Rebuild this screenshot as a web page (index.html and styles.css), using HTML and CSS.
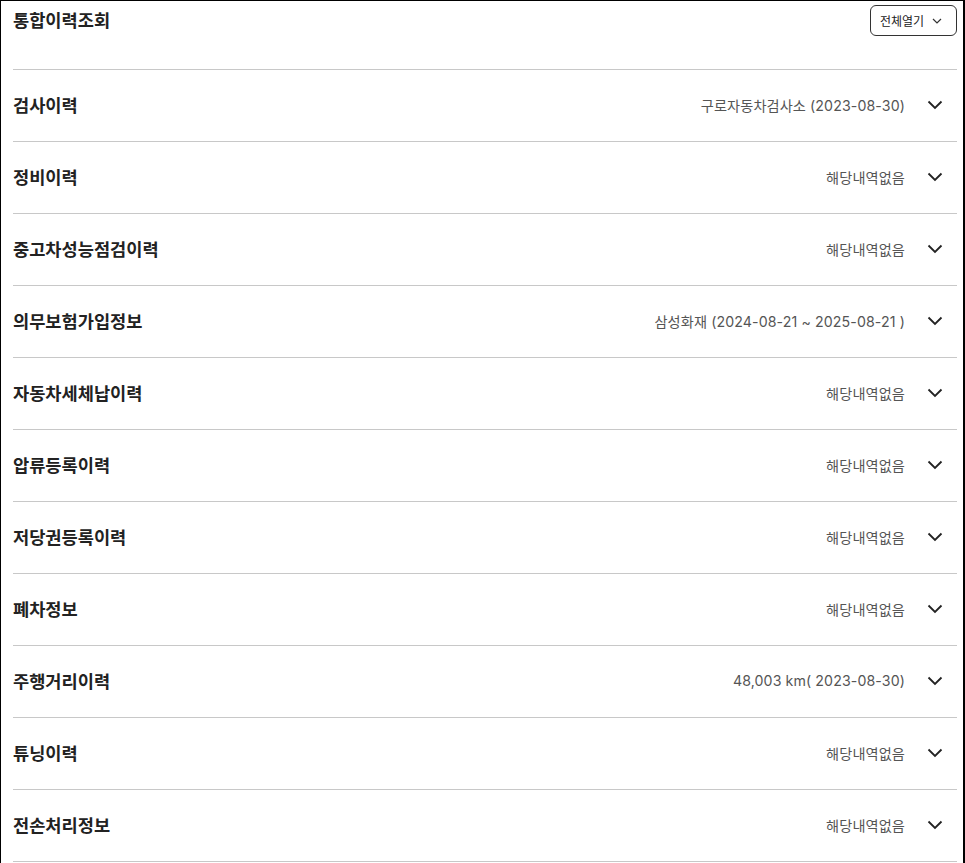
FILE: index.html
```html
<!DOCTYPE html>
<html lang="ko">
<head>
<meta charset="utf-8">
<title>통합이력조회</title>
<link rel="stylesheet" href="styles.css">
</head>
<body>
<div class="frame">
  <div class="header">
    <h2 class="title">통합이력조회</h2>
    <button class="open-all" type="button">전체열기
      <svg class="btn-chev" width="10" height="6" viewBox="0 0 10 6"><path d="M1 1l4 4 4-4" fill="none" stroke="#333" stroke-width="1.2"/></svg>
    </button>
  </div>
  <ul class="list">
    <li class="row"><span class="name">검사이력</span><span class="info">구로자동차검사소 (2023-08-30)</span><svg class="chev" width="16" height="10" viewBox="0 0 16 10"><path d="M1.5 1.5l6.5 6.5 6.5-6.5" fill="none" stroke="#222" stroke-width="1.8"/></svg></li>
    <li class="row"><span class="name">정비이력</span><span class="info">해당내역없음</span><svg class="chev" width="16" height="10" viewBox="0 0 16 10"><path d="M1.5 1.5l6.5 6.5 6.5-6.5" fill="none" stroke="#222" stroke-width="1.8"/></svg></li>
    <li class="row"><span class="name">중고차성능점검이력</span><span class="info">해당내역없음</span><svg class="chev" width="16" height="10" viewBox="0 0 16 10"><path d="M1.5 1.5l6.5 6.5 6.5-6.5" fill="none" stroke="#222" stroke-width="1.8"/></svg></li>
    <li class="row"><span class="name">의무보험가입정보</span><span class="info">삼성화재 (2024-08-21 ~ 2025-08-21 )</span><svg class="chev" width="16" height="10" viewBox="0 0 16 10"><path d="M1.5 1.5l6.5 6.5 6.5-6.5" fill="none" stroke="#222" stroke-width="1.8"/></svg></li>
    <li class="row"><span class="name">자동차세체납이력</span><span class="info">해당내역없음</span><svg class="chev" width="16" height="10" viewBox="0 0 16 10"><path d="M1.5 1.5l6.5 6.5 6.5-6.5" fill="none" stroke="#222" stroke-width="1.8"/></svg></li>
    <li class="row"><span class="name">압류등록이력</span><span class="info">해당내역없음</span><svg class="chev" width="16" height="10" viewBox="0 0 16 10"><path d="M1.5 1.5l6.5 6.5 6.5-6.5" fill="none" stroke="#222" stroke-width="1.8"/></svg></li>
    <li class="row"><span class="name">저당권등록이력</span><span class="info">해당내역없음</span><svg class="chev" width="16" height="10" viewBox="0 0 16 10"><path d="M1.5 1.5l6.5 6.5 6.5-6.5" fill="none" stroke="#222" stroke-width="1.8"/></svg></li>
    <li class="row"><span class="name">폐차정보</span><span class="info">해당내역없음</span><svg class="chev" width="16" height="10" viewBox="0 0 16 10"><path d="M1.5 1.5l6.5 6.5 6.5-6.5" fill="none" stroke="#222" stroke-width="1.8"/></svg></li>
    <li class="row"><span class="name">주행거리이력</span><span class="info">48,003 km( 2023-08-30)</span><svg class="chev" width="16" height="10" viewBox="0 0 16 10"><path d="M1.5 1.5l6.5 6.5 6.5-6.5" fill="none" stroke="#222" stroke-width="1.8"/></svg></li>
    <li class="row"><span class="name">튜닝이력</span><span class="info">해당내역없음</span><svg class="chev" width="16" height="10" viewBox="0 0 16 10"><path d="M1.5 1.5l6.5 6.5 6.5-6.5" fill="none" stroke="#222" stroke-width="1.8"/></svg></li>
    <li class="row"><span class="name">전손처리정보</span><span class="info">해당내역없음</span><svg class="chev" width="16" height="10" viewBox="0 0 16 10"><path d="M1.5 1.5l6.5 6.5 6.5-6.5" fill="none" stroke="#222" stroke-width="1.8"/></svg></li>
  </ul>
</div>
</body>
</html>
```
FILE: styles.css
```css
* { box-sizing: border-box; }
html, body { margin: 0; padding: 0; background: #fff; }
body {
  font-family: "Noto Sans", "Noto Sans CJK KR", sans-serif;
  color: #222;
}
.frame {
  width: 965px;
  height: 863px;
  overflow: hidden;
  border-top: 1px solid #000;
  border-left: 1px solid #000;
  border-right: 2px solid #000;
  padding: 0 6px 0 12px;
}
.header {
  height: 69px;
  display: flex;
  justify-content: space-between;
  align-items: flex-start;
  padding-top: 4px;
  border-bottom: 1px solid #c8c8c8;
}
.title {
  margin: 0;
  font-size: 17.6px;
  font-weight: 700;
  line-height: 30px;
  color: #222;
}
.open-all {
  height: 31px;
  width: 87px;
  border: 1px solid #333;
  border-radius: 6px;
  background: #fff;
  font-family: inherit;
  font-size: 12px;
  color: #222;
  display: flex;
  align-items: center;
  padding: 0 0 0 9px;
  gap: 8px;
  cursor: pointer;
}
.btn-chev { display: block; }
.list {
  list-style: none;
  margin: 0;
  padding: 0;
}
.row {
  height: 72px;
  display: flex;
  align-items: center;
  padding-bottom: 2px;
  border-bottom: 1px solid #c8c8c8;
}
.name {
  font-size: 17.6px;
  font-weight: 700;
  color: #222;
  flex: 1;
}
.info {
  font-family: "Inter", "Noto Sans CJK KR", sans-serif;
  font-size: 14.2px;
  color: #555;
  margin-right: 22px;
  letter-spacing: 0.1px;
}
.chev {
  display: block;
  margin-right: 14px;
}
```
